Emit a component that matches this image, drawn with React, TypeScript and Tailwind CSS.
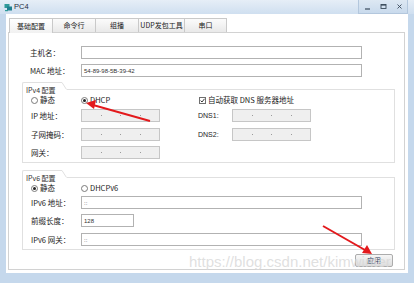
import React from 'react';

const font = "font-['Noto_Sans_CJK_SC',sans-serif]";

function Radio({ checked, label }: { checked?: boolean; label: string }) {
  return (
    <div className="flex items-center gap-[2px] h-[12px]">
      <div className="w-[7px] h-[7px] rounded-full border border-[#7a7a7a] bg-white flex items-center justify-center">
        {checked && <div className="w-[3px] h-[3px] rounded-full bg-[#222]" />}
      </div>
      <span className="text-[7.5px] leading-none text-[#222]">{label}</span>
    </div>
  );
}

function TextBox({ w, value }: { w: string; value?: string }) {
  return (
    <div className={`${w} h-[13px] border border-[#b2b2b2] bg-white flex items-center pl-[2px]`}>
      <span className="text-[6px] leading-none text-[#333] font-['Liberation_Sans',sans-serif]">{value}</span>
    </div>
  );
}

function IpBox() {
  return (
    <div className="w-[79px] h-[13px] border border-[#c6c6c6] bg-[#efefef] flex items-center justify-evenly">
      <div className="w-[1px] h-[1px] bg-[#9a9a9a]" />
      <div className="w-[1px] h-[1px] bg-[#9a9a9a]" />
      <div className="w-[1px] h-[1px] bg-[#9a9a9a]" />
    </div>
  );
}

function Label({ text, w = 'w-[51px]' }: { text: string; w?: string }) {
  return <span className={`${w} shrink-0 text-[7.5px] leading-none text-[#222]`}>{text}</span>;
}

function GroupHeader({ title }: { title: string }) {
  return (
    <div className="flex h-[8px]">
      <div className="w-[40px] border-t border-l border-[#e0e0e0] rounded-tl-[2px] pl-[3px] pt-[4px]">
        <span className="block whitespace-nowrap text-[7px] leading-none text-[#333]">{title}</span>
      </div>
      <svg width="5" height="8" className="shrink-0">
        <path d="M0 0.5 L4.5 7.5" stroke="#e0e0e0" strokeWidth="1" fill="none" />
      </svg>
      <div className="flex-1 border-b border-[#e0e0e0]" />
    </div>
  );
}

export default function App() {
  const tabs = ['基础配置', '命令行', '组播', 'UDP发包工具', '串口'];
  const tabWidths = ['w-[44px]', 'w-[44px]', 'w-[44px]', 'w-[47px]', 'w-[43px]'];

  return (
    <div className={`w-[414px] h-[283px] relative overflow-hidden bg-[#c5d8ec] flex flex-col ${font}`}>
      {/* title bar */}
      <div className="h-[14px] flex items-center bg-gradient-to-b from-[#e6eef7] to-[#cfdff0]">
        <svg width="9" height="9" viewBox="0 0 9 9" className="ml-[4px]">
          <rect x="0.5" y="1" width="5" height="4" fill="#2f9a9a" />
          <rect x="3" y="3.5" width="5" height="4" fill="#1f7f8f" />
          <rect x="1" y="7" width="3" height="1.2" fill="#2f9a9a" />
        </svg>
        <span className="ml-[1px] text-[7.5px] leading-none text-[#1e2d3d] font-['Liberation_Sans',sans-serif]">PC4</span>
        <div className="ml-auto mr-[6px] h-full w-[50px] flex items-center justify-around border-l border-r border-b border-[#b3c7dd] bg-gradient-to-b from-[#dde8f3] to-[#c9daec]">
          <svg width="7" height="7"><path d="M1 6 H6" stroke="#3a4a5a" strokeWidth="1.2" /></svg>
          <svg width="7" height="7"><rect x="1" y="1.5" width="5" height="4" stroke="#3a4a5a" fill="none" strokeWidth="0.9" /><path d="M1 2 H6" stroke="#3a4a5a" strokeWidth="1.2" /></svg>
          <svg width="7" height="7"><path d="M1.5 1.5 L5.5 5.5 M5.5 1.5 L1.5 5.5" stroke="#3a4a5a" strokeWidth="0.9" /></svg>
        </div>
      </div>

      {/* client */}
      <div className="mx-[6px] h-[259px] bg-white flex flex-col">
        <div className="mt-[4px] h-[15px] pl-[3px] flex">
          {tabs.map((t, i) => (
            <div
              key={t}
              className={`${tabWidths[i]} h-[15px] border border-[#c9c9c9] -ml-[1px] first:ml-0 flex items-center justify-center ${
                i === 0 ? 'bg-gradient-to-b from-[#ffffff] to-[#f1f1f1] border-b-0 z-10' : 'bg-gradient-to-b from-[#fbfbfb] to-[#e9e9e9]'
              }`}
            >
              <span className="text-[7px] leading-none text-[#222] whitespace-nowrap">{t}</span>
            </div>
          ))}
        </div>

        <div className="ml-[2px] mr-[3px] h-[238px] -mt-[1px] border border-[#d2d2d2] flex flex-col">
          <div className="mt-[13px] ml-[21px] flex items-center">
            <Label text="主机名：" />
            <TextBox w="w-[281px]" />
          </div>
          <div className="mt-[5px] ml-[21px] flex items-center">
            <Label text="MAC 地址：" />
            <TextBox w="w-[281px]" value="54-89-98-5B-39-42" />
          </div>

          {/* IPv4 */}
          <div className="mt-[5px] ml-[13px] w-[373px] flex flex-col">
            <GroupHeader title="IPv4 配置" />
            <div className="h-[73px] border-l border-r border-b border-[#e0e0e0] flex flex-col pl-[8px]">
              <div className="mt-[4px] flex items-center">
                <div className="w-[50px]"><Radio label="静态" /></div>
                <div className="w-[118px]"><Radio checked label="DHCP" /></div>
                <div className="flex items-center gap-[2px]">
                  <svg width="7" height="7" viewBox="0 0 7 7">
                    <rect x="0.5" y="0.5" width="6" height="6" fill="white" stroke="#6f6f6f" />
                    <path d="M1.6 3.6 L3 5 L5.5 1.8" stroke="#222" strokeWidth="0.9" fill="none" />
                  </svg>
                  <span className="text-[7.5px] leading-none text-[#222]">自动获取 DNS 服务器地址</span>
                </div>
              </div>
              <div className="mt-[3px] flex items-center">
                <Label text="IP 地址：" w="w-[50px]" />
                <IpBox />
                <span className="ml-[38px] w-[34px] text-[7px] leading-none text-[#222] font-['Liberation_Sans',sans-serif]">DNS1:</span>
                <IpBox />
              </div>
              <div className="mt-[6px] flex items-center">
                <Label text="子网掩码：" w="w-[50px]" />
                <IpBox />
                <span className="ml-[38px] w-[34px] text-[7px] leading-none text-[#222] font-['Liberation_Sans',sans-serif]">DNS2:</span>
                <IpBox />
              </div>
              <div className="mt-[5px] flex items-center">
                <Label text="网关：" w="w-[50px]" />
                <IpBox />
              </div>
            </div>
          </div>

          {/* IPv6 */}
          <div className="mt-[7px] ml-[13px] w-[373px] flex flex-col">
            <GroupHeader title="IPv6 配置" />
            <div className="h-[72px] border-l border-r border-b border-[#e0e0e0] flex flex-col pl-[8px]">
              <div className="mt-[4px] flex items-center">
                <div className="w-[50px]"><Radio checked label="静态" /></div>
                <Radio label="DHCPv6" />
              </div>
              <div className="mt-[2px] flex items-center">
                <Label text="IPv6 地址：" w="w-[50px]" />
                <TextBox w="w-[281px]" value="::" />
              </div>
              <div className="mt-[5px] flex items-center">
                <Label text="前缀长度：" w="w-[50px]" />
                <TextBox w="w-[53px]" value="128" />
              </div>
              <div className="mt-[6px] flex items-center">
                <Label text="IPv6 网关：" w="w-[50px]" />
                <TextBox w="w-[281px]" value="::" />
              </div>
            </div>
          </div>

          <div className="mt-[4px] self-end mr-[11px] w-[38px] h-[13px] border border-[#acacac] rounded-[2px] bg-gradient-to-b from-[#f6f6f6] to-[#dddddd] flex items-center justify-center">
            <span className="text-[7px] leading-none text-[#2a3a5a]">应用</span>
          </div>
        </div>
      </div>

      {/* annotations */}
      <span className="absolute left-[189px] top-[254px] text-[15px] leading-none text-[#d8d8d8]/80 font-['Liberation_Sans',sans-serif] whitespace-nowrap pointer-events-none">
        https://blog.csdn.net/kimwinter
      </span>
      <svg className="absolute left-0 top-0 pointer-events-none" width="414" height="283">
        <line x1="150" y1="121" x2="93" y2="105" stroke="#e3191c" strokeWidth="2" />
        <polygon points="86,103 96,100 94,109" fill="#e3191c" />
        <line x1="323" y1="226" x2="365" y2="250" stroke="#e3191c" strokeWidth="2" />
        <polygon points="372,254 362,253 367,245" fill="#e3191c" />
      </svg>
    </div>
  );
}
